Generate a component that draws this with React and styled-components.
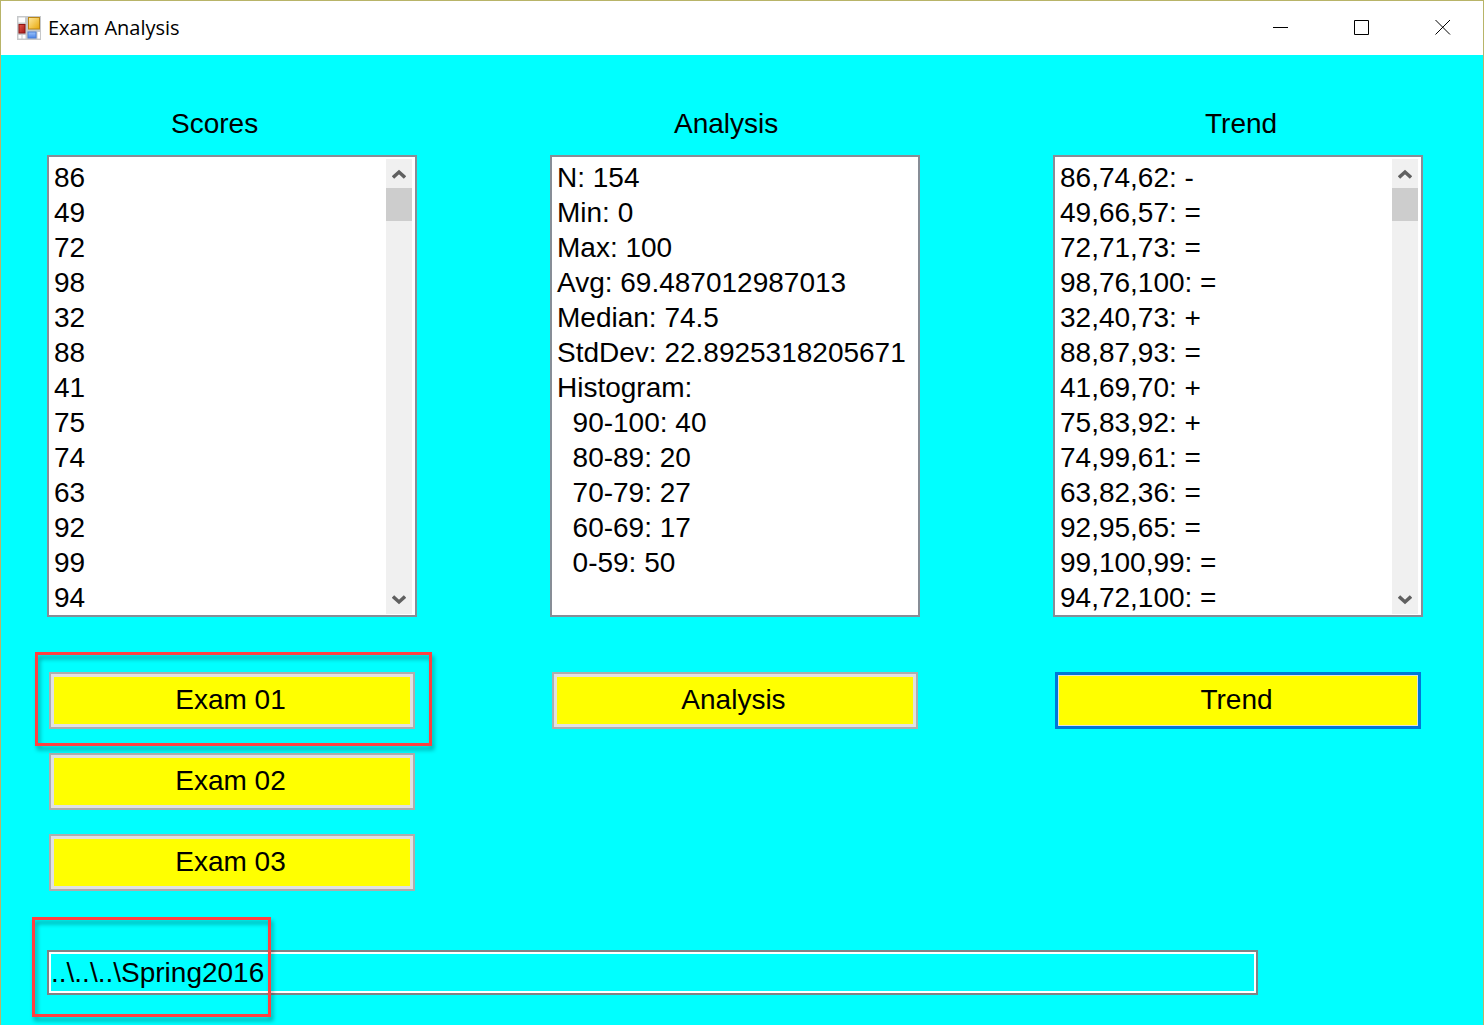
import React, { useId, useRef } from "react";
import styled, { createGlobalStyle } from "styled-components";

const GlobalStyle = createGlobalStyle`
  *, *::before, *::after { box-sizing: border-box; }
  body { margin: 0; }
`;

const Window = styled.div`
  display: flex;
  flex-direction: column;
  min-height: 100vh;
  border: 1px solid #b8b468;
  border-bottom: 0;
  background: #00ffff;
  color: #000;
  font-family: "Liberation Sans", Arial, sans-serif;
  font-size: 28px;
`;

const TitleBar = styled.header`
  display: flex;
  align-items: center;
  height: 54px;
  padding-left: 15px;
  background: #fff;
`;

const Title = styled.h1`
  flex: 1;
  margin: 0 0 0 6px;
  font-family: "Open Sans", "Noto Sans", sans-serif;
  font-size: 20px;
  font-weight: 400;
  line-height: 28px;
`;

const CaptionButton = styled.button`
  display: grid;
  place-items: center;
  width: 81px;
  height: 54px;
  padding: 0 0 2px;
  border: 0;
  background: transparent;
  color: #000;
`;

const Form = styled.main`
  flex: 1;
  display: flex;
  flex-direction: column;
  gap: 59px;
  padding: 51px 60px 29px 46px;
`;

const Columns = styled.div`
  display: grid;
  grid-template-columns: repeat(3, minmax(0, 370fr));
  column-gap: 133px;
  align-items: start;
`;

const Column = styled.section`
  display: flex;
  flex-direction: column;
`;

const ListLabel = styled.label`
  padding-left: ${(p) => p.$indent}px;
  margin-bottom: 13px;
  line-height: 36px;
`;

const ListFrame = styled.div`
  display: flex;
  height: 462px;
  padding: 2px 3px 1px 0;
  border: 2px solid #878d96;
  background: #fff;
`;

const ListBox = styled.select`
  flex: 1;
  min-width: 0;
  height: 455px;
  margin: 0;
  padding: 0;
  border: 0;
  outline: 0;
  border-radius: 0;
  appearance: none;
  overflow: hidden;
  background: #fff;
  color: #000;
  font: inherit;
`;

const ListItem = styled.option`
  height: 35px;
  min-height: 35px;
  padding: 3px 0 0 5px;
  line-height: 32px;
  white-space: pre;
  color: #000;
`;

const ScrollBar = styled.div`
  display: flex;
  flex-direction: column;
  width: 26px;
  background: #f0f0f0;
`;

const ScrollButton = styled.button`
  display: grid;
  place-items: center;
  height: 29px;
  padding: 0;
  border: 0;
  background: transparent;
  color: #606060;
`;

const ScrollTrack = styled.div`
  flex: 1;
`;

const ScrollThumb = styled.div`
  height: 33px;
  background: #cdcdcd;
`;

const Actions = styled.div`
  display: flex;
  flex-direction: column;
  gap: 24px;
  margin-top: 55px;
  padding: 0 2px;
`;

const ActionButton = styled.button`
  width: 100%;
  height: 57px;
  padding: 0 3px 2px 0;
  border: ${(p) => (p.$focused ? "3px solid #0078d7" : "2px solid #adadad")};
  box-shadow: inset 0 0 0 ${(p) => (p.$focused ? "1px" : "3px")} #e1e1e1;
  background: #ffff00;
  color: #000;
  font: inherit;
`;

const Marked = styled.div`
  position: relative;
`;

const Highlight = styled.div`
  position: absolute;
  border: 3px solid #ff4040;
  filter: drop-shadow(2px 4px 2px rgba(0, 0, 0, 0.35));
  pointer-events: none;
`;

const ButtonHighlight = styled(Highlight)`
  inset: -20px -17px -17px -14px;
`;

const PathHighlight = styled(Highlight)`
  inset: -33px auto -22px -15px;
  width: 239px;
`;

const PathInput = styled.input`
  display: block;
  width: 88%;
  height: 45px;
  padding: 0 2px;
  border: 2px solid #7f8285;
  border-radius: 0;
  outline: 0;
  box-shadow: inset 0 0 0 2px #fff;
  background: transparent;
  color: #000;
  font: inherit;
`;

const scores = ["86", "49", "72", "98", "32", "88", "41", "75", "74", "63", "92", "99", "94"];

const analysis = [
  "N: 154",
  "Min: 0",
  "Max: 100",
  "Avg: 69.487012987013",
  "Median: 74.5",
  "StdDev: 22.8925318205671",
  "Histogram:",
  "\u00a0\u00a090-100: 40",
  "\u00a0\u00a080-89: 20",
  "\u00a0\u00a070-79: 27",
  "\u00a0\u00a060-69: 17",
  "\u00a0\u00a00-59: 50",
];

const trend = [
  "86,74,62: -",
  "49,66,57: =",
  "72,71,73: =",
  "98,76,100: =",
  "32,40,73: +",
  "88,87,93: =",
  "41,69,70: +",
  "75,83,92: +",
  "74,99,61: =",
  "63,82,36: =",
  "92,95,65: =",
  "99,100,99: =",
  "94,72,100: =",
];

function Chevron({ down }) {
  return (
    <svg width="14" height="12" viewBox="0 0 14 12" fill="none" aria-hidden="true">
      <path d={down ? "M1 2.5L7 8L13 2.5" : "M1 9.5L7 4L13 9.5"} stroke="currentColor" strokeWidth="3.5" />
    </svg>
  );
}

function FormIcon() {
  return (
    <svg width="26" height="26" viewBox="0 0 26 26" aria-hidden="true">
      <defs>
        <linearGradient id="gold" x1="0" y1="0" x2="1" y2="1">
          <stop offset="0" stopColor="#ffe9a0" />
          <stop offset="1" stopColor="#e8a808" />
        </linearGradient>
        <linearGradient id="blue" x1="0" y1="0" x2="0" y2="1">
          <stop offset="0" stopColor="#9cc4fb" />
          <stop offset="1" stopColor="#4a84e8" />
        </linearGradient>
        <linearGradient id="red" x1="0" y1="0" x2="1" y2="1">
          <stop offset="0" stopColor="#e05a4c" />
          <stop offset="1" stopColor="#a81414" />
        </linearGradient>
      </defs>
      <rect x="1" y="1" width="24" height="24" fill="#c6c8ca" />
      <rect x="2.5" y="2.5" width="6.5" height="5" fill="#fff" />
      <rect x="2.5" y="20" width="3" height="3.5" fill="#fff" />
      <rect x="6.5" y="20" width="3" height="3.5" fill="#fff" />
      <rect x="21.5" y="17" width="2.5" height="6.5" fill="#fff" />
      <rect x="12.500" y="2.500" width="11" height="11.500" fill="url(#gold)" stroke="#b98516" />
      <rect x="3" y="9.500" width="6" height="8.500" fill="url(#red)" stroke="#8f1414" />
      <rect x="12" y="17" width="8" height="6" fill="url(#blue)" stroke="#4a7fd6" />
    </svg>
  );
}

function ScrollList({ label, indent, items, scrollable }) {
  const id = useId();
  const list = useRef(null);
  const scroll = (amount) => list.current.scrollBy({ top: amount });
  return (
    <>
      <ListLabel htmlFor={id} $indent={indent}>{label}</ListLabel>
      <ListFrame>
        <ListBox id={id} ref={list} size={13}>
          {items.map((item) => (
            <ListItem key={item}>{item}</ListItem>
          ))}
        </ListBox>
        {scrollable && (
          <ScrollBar>
            <ScrollButton type="button" aria-label="Scroll up" onClick={() => scroll(-35)}>
              <Chevron />
            </ScrollButton>
            <ScrollTrack>
              <ScrollThumb />
            </ScrollTrack>
            <ScrollButton type="button" aria-label="Scroll down" onClick={() => scroll(35)}>
              <Chevron down />
            </ScrollButton>
          </ScrollBar>
        )}
      </ListFrame>
    </>
  );
}

export default function App() {
  return (
    <>
      <GlobalStyle />
      <Window>
        <TitleBar>
          <FormIcon />
          <Title>Exam Analysis</Title>
          <CaptionButton type="button" aria-label="Minimize">
            <svg width="16" height="16" aria-hidden="true"><path d="M0 8.5H15" stroke="currentColor" /></svg>
          </CaptionButton>
          <CaptionButton type="button" aria-label="Maximize">
            <svg width="16" height="16" fill="none" aria-hidden="true"><path d="M0.5 1.5H14.5V15.5H0.5Z" stroke="currentColor" /></svg>
          </CaptionButton>
          <CaptionButton type="button" aria-label="Close">
            <svg width="16" height="16" aria-hidden="true"><path d="M0.5 1L15 15.5M15 1L0.5 15.5" stroke="currentColor" /></svg>
          </CaptionButton>
        </TitleBar>
        <Form>
          <Columns>
            <Column>
              <ScrollList label="Scores" indent={124} items={scores} scrollable />
              <Actions>
                <Marked>
                  <ActionButton type="button">Exam 01</ActionButton>
                  <ButtonHighlight />
                </Marked>
                <ActionButton type="button">Exam 02</ActionButton>
                <ActionButton type="button">Exam 03</ActionButton>
              </Actions>
            </Column>
            <Column>
              <ScrollList label="Analysis" indent={124} items={analysis} />
              <Actions>
                <ActionButton type="button">Analysis</ActionButton>
              </Actions>
            </Column>
            <Column>
              <ScrollList label="Trend" indent={152} items={trend} scrollable />
              <Actions>
                <ActionButton type="button" $focused>Trend</ActionButton>
              </Actions>
            </Column>
          </Columns>
          <Marked>
            <PathInput type="text" aria-label="Data folder" defaultValue={"..\\..\\..\\Spring2016"} />
            <PathHighlight />
          </Marked>
        </Form>
      </Window>
    </>
  );
}
